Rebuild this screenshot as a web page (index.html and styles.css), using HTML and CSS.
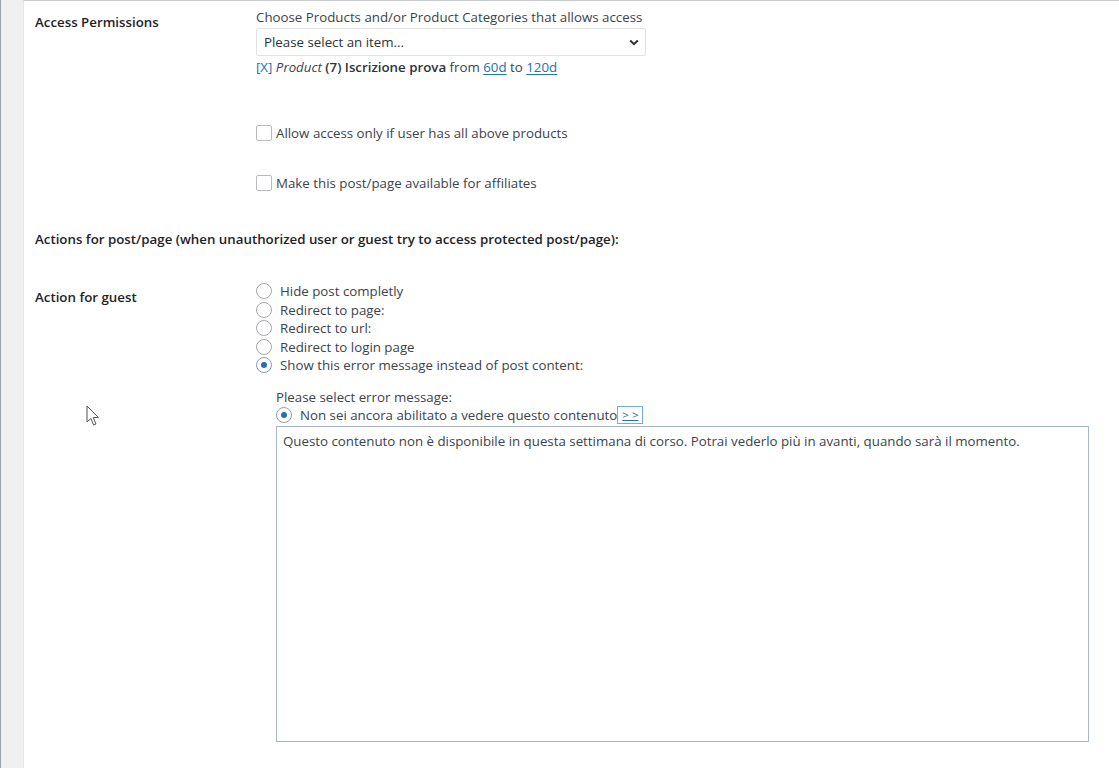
FILE: index.html
```html
<!DOCTYPE html>
<html lang="it">
<head>
<meta charset="utf-8">
<title>Access Permissions</title>
<link rel="stylesheet" href="styles.css">
</head>
<body>
<div class="wrap">
  <div class="sidebar"></div>
  <main class="panel">
    <div class="row row-access">
      <div class="label">Access Permissions</div>
      <div class="field">
        <div class="hint">Choose Products and/or Product Categories that allows access</div>
        <div class="select">
          <span>Please select an item...</span>
          <svg class="chev" width="10" height="7" viewBox="0 0 10 7"><path d="M1.2 1.5 L5 5.2 L8.8 1.5" fill="none" stroke="#2c3338" stroke-width="2"/></svg>
        </div>
        <div class="selected"><a class="lnk x">[X]</a> <em>Product</em> <b>(7) Iscrizione prova</b> from <a class="lnk">60d</a> to <a class="lnk">120d</a></div>
        <label class="check c1"><span class="box"></span>Allow access only if user has all above products</label>
        <label class="check c2"><span class="box"></span>Make this post/page available for affiliates</label>
      </div>
    </div>

    <div class="section-title">Actions for post/page (when unauthorized user or guest try to access protected post/page):</div>

    <div class="row row-guest">
      <div class="label">Action for guest</div>
      <div class="field">
        <div class="radios">
          <label class="radio"><span class="dot"></span>Hide post completly</label>
          <label class="radio"><span class="dot"></span>Redirect to page:</label>
          <label class="radio"><span class="dot"></span>Redirect to url:</label>
          <label class="radio"><span class="dot"></span>Redirect to login page</label>
          <label class="radio"><span class="dot on"></span>Show this error message instead of post content:</label>
        </div>
        <div class="errmsg">
          <div class="errhint">Please select error message:</div>
          <label class="radio msg"><span class="dot on"></span><span>Non sei ancora abilitato a vedere questo contenuto<a class="more">&gt; &gt;</a></span></label>
          <div class="textarea">Questo contenuto non è disponibile in questa settimana di corso. Potrai vederlo più in avanti, quando sarà il momento.</div>
        </div>
      </div>
    </div>

    <svg class="cursor" width="14" height="22" viewBox="0 0 14 22"><path d="M1 1 L1 17 L4.8 13.4 L7.6 20 L10 19 L7.2 12.6 L12.4 12.4 Z" fill="#fff" stroke="#555" stroke-width="1" stroke-linejoin="round"/></svg>
  </main>
</div>
</body>
</html>
```

FILE: styles.css
```css
html, body {
  margin: 0;
  padding: 0;
  height: 100%;
  overflow: hidden;
}
body {
  background: #f0f0f1;
  font-family: "Open Sans", "Noto Sans", sans-serif;
  font-size: 13.3px;
  line-height: 18px;
  color: #3c434a;
}
.wrap {
  display: flex;
  height: 768px;
}
.sidebar {
  width: 22px;
  flex: none;
  border-left: 1px solid #9ea3a8;
  background: #f0f0f1;
}
.panel {
  position: relative;
  flex: 1;
  background: #fff;
  border-left: 1px solid #e6e7e8;
  border-top: 1px solid #c9cacc;
  padding: 7px 0 0 11px;
}
.row {
  display: flex;
}
.label {
  width: 221px;
  flex: none;
  font-weight: 600;
  color: #1d2327;
}
.row-access .label { padding-top: 5px; }
.row-guest .label { padding-top: 6px; }
.field {
  display: flex;
  flex-direction: column;
  align-items: flex-start;
}
.hint { height: 18px; }
.select {
  box-sizing: border-box;
  margin-top: 2px;
  width: 390px;
  height: 28px;
  border: 1px solid #e2e3e5;
  border-radius: 2px;
  display: flex;
  align-items: center;
  justify-content: space-between;
  padding: 0 6px 0 7px;
  color: #2c3338;
}
.selected {
  margin-top: 2px;
  height: 18px;
}
.selected b { font-weight: 600; color: #2c3338; }
.lnk {
  color: #2271b1;
  text-decoration: underline;
  text-underline-offset: 2px;
}
.lnk.x { text-decoration: none; }
.check {
  display: flex;
  align-items: center;
  height: 18px;
  gap: 4px;
}
.c1 { margin-top: 48px; }
.c2 { margin-top: 32px; }
.box {
  box-sizing: border-box;
  width: 16px;
  height: 16px;
  border: 1px solid #b9bbbe;
  border-radius: 2px;
  background: #fff;
}
.section-title {
  margin-top: 38px;
  height: 18px;
  font-weight: 600;
  color: #1d2327;
}
.row-guest { margin-top: 34px; }
.radios {
  display: flex;
  flex-direction: column;
}
.radio {
  display: flex;
  align-items: center;
  height: 18.5px;
  gap: 8px;
}
.dot {
  box-sizing: border-box;
  width: 16px;
  height: 16px;
  border: 1px solid #a7aaad;
  border-radius: 50%;
  background: #fff;
  display: flex;
  align-items: center;
  justify-content: center;
}
.dot.on { border-color: #8c9fb8; }
.dot.on::after {
  content: "";
  width: 6px;
  height: 6px;
  border-radius: 50%;
  background: #2271b1;
}
.errmsg {
  margin-left: 20px;
  margin-top: 13.5px;
}
.errhint { height: 18px; }
.radio.msg { height: 18px; gap: 8px; }
.more {
  display: inline-block;
  box-sizing: border-box;
  height: 18px;
  padding: 0 4px;
  border: 1px solid #72aee6;
  color: #2271b1;
  text-decoration: underline;
  line-height: 16px;
  font-size: 11.5px;
  vertical-align: top;
}
.textarea {
  box-sizing: border-box;
  margin-top: 2px;
  width: 813px;
  height: 316px;
  border: 1px solid #a9b6c8;
  padding: 5px 6px;
  color: #3c434a;
}
.cursor {
  position: absolute;
  left: 62px;
  top: 404px;
}
```
